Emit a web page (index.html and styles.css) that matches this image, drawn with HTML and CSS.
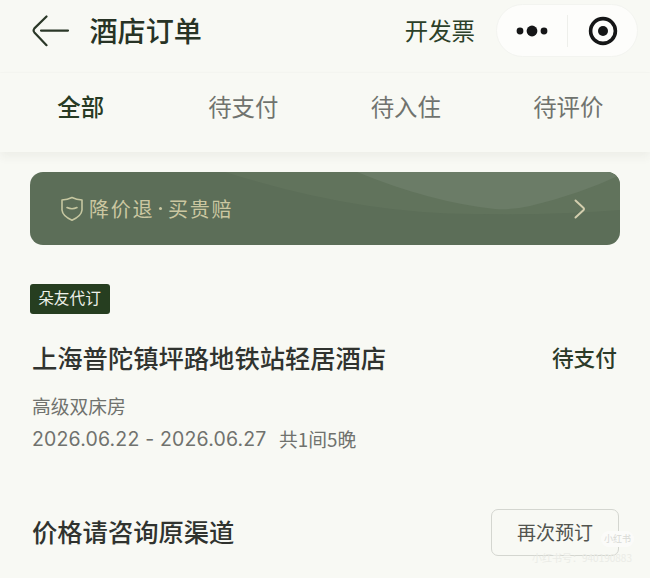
FILE: index.html
```html
<!DOCTYPE html>
<html lang="zh-CN">
<head>
<meta charset="utf-8">
<title>酒店订单</title>
<link rel="stylesheet" href="styles.css">
</head>
<body>
<header class="navbar">
  <svg class="back" width="38" height="32" viewBox="0 0 38 32"><path d="M14.500 1.500 2.400 13.400Q.8 15.500 2.400 17.400L14.500 30.200M9 15.600H36"/></svg>
  <h1 class="title">酒店订单</h1>
  <span class="invoice">开发票</span>
  <div class="capsule">
    <svg width="32" height="14" viewBox="0 0 32 14"><circle cx="4" cy="7" r="3.4"/><circle cx="16" cy="7" r="5.4"/><circle cx="28" cy="7" r="3.4"/></svg>
    <i class="divider"></i>
    <svg width="30" height="30" viewBox="0 0 30 30"><circle class="ring" cx="15" cy="15" r="12.4"/><circle cx="15" cy="15" r="5"/></svg>
  </div>
</header>
<nav class="tabs">
  <span class="tab active">全部</span>
  <span class="tab">待支付</span>
  <span class="tab">待入住</span>
  <span class="tab">待评价</span>
</nav>
<main class="content">
  <section class="banner">
    <svg class="waves" width="590" height="73" viewBox="0 0 590 73"><path class="wave" d="M195 0Q330 43 450 42Q530 43 590 38V0Z"/><path class="wave light" d="M327 0Q400 30 465 37Q483 38 500 34Q550 22 590 3V0Z"/></svg>
    <svg class="shield" width="24" height="26" viewBox="0 0 24 26"><path d="M12 1.500Q16.500 3.600 22 4V14Q21.500 20 12 24.200Q2.500 20 2 14V4Q7.500 3.600 12 1.500ZM7 11.500Q12 14 17 11.500"/></svg>
    <span class="promise"><span>降价退</span><i class="dot"></i><span>买贵赔</span></span>
    <svg class="chevron" width="12" height="20" viewBox="0 0 12 20"><path d="M1.500 1.500 9.600 9Q10.500 10 9.600 11L1.500 18.500"/></svg>
  </section>
  <article class="order">
    <span class="badge">朵友代订</span>
    <div class="row heading"><h2 class="hotel">上海普陀镇坪路地铁站轻居酒店</h2><span class="status">待支付</span></div>
    <p class="room">高级双床房</p>
    <p class="dates"><span class="range">2026.06.22 - 2026.06.27</span><span>共1间5晚</span></p>
    <div class="row footer">
      <strong class="price">价格请咨询原渠道</strong>
      <div class="rebook">再次预订<span class="mark">小红书</span><span class="mark-id">小红书号：940190883</span></div>
    </div>
  </article>
</main>
</body>
</html>
```
FILE: styles.css
```css
* { box-sizing: border-box; margin: 0; padding: 0; }
body {
  width: 650px; height: 578px; overflow: hidden;
  background: #f8f9f4; color: #30332f;
  font-family: "Noto Sans CJK SC", sans-serif;
}
svg { display: block; flex: none; fill: none; stroke-linecap: round; stroke-linejoin: round; }
.navbar { display: flex; align-items: center; height: 73px; padding: 0 12px 11px 32px; border-bottom: 1px solid #f5f6f1; }
.back { stroke: #2b3828; stroke-width: 2.2; }
.title { margin-left: 19.500px; padding-bottom: 1px; font-size: 28.100px; font-weight: 500; line-height: 40px; color: #283325; }
.invoice { margin-left: auto; padding-bottom: 1px; font-size: 23.400px; line-height: 34px; color: #2c4028; }
.capsule {
  display: flex; align-items: center; width: 142px; height: 53px; margin-left: 21px; padding: 0 18px 0 19px;
  border: 1px solid #f3f4f0; border-radius: 27px; background: #fdfdfb;
}
.capsule svg { fill: #151617; }
.capsule .ring { fill: none; stroke: #151617; stroke-width: 3.600px; }
.divider { width: 1px; height: 32px; margin: 0 20px 0 19px; background: #eeefeb; }
.tabs { display: flex; height: 79px; padding-top: 16px; box-shadow: 0 5px 9px rgba(60, 65, 50, .06); }
.tab { width: 162.500px; padding-right: 1px; text-align: center; font-size: 23.400px; line-height: 34px; color: #70736e; }
.active { font-weight: 500; color: #283b24; }
.content { padding: 20px 30px 0; }
.banner { position: relative; display: flex; align-items: center; height: 73px; padding: 0 34px 0 30px; border-radius: 13px; overflow: hidden; background: #5c6e58; }
.waves { position: absolute; inset: 0; }
.wave { fill: #61735c; }
.light { fill: #6b7c67; }
.shield { position: relative; stroke: #c6c7a0; stroke-width: 1.600px; }
.promise { position: relative; display: flex; align-items: center; margin-left: 5px; font-size: 20px; letter-spacing: 1.700px; line-height: 30px; color: #cbc7a1; }
.dot { width: 3px; height: 3px; margin: 0 6px 0 5px; border-radius: 50%; background: #cbc7a1; }
.chevron { position: relative; margin-left: auto; stroke: #d3ceae; stroke-width: 2; }
.order { padding-top: 39px; }
.badge { display: block; width: 80px; height: 30px; padding-right: 1px; border-radius: 3px; background: #263e20; color: #eef1ea; text-align: center; font-size: 15.700px; line-height: 28px; }
.row { display: flex; align-items: center; justify-content: space-between; padding-left: 2px; }
.heading { height: 40px; margin-top: 23px; padding-right: 3px; }
.hotel, .price { font-size: 25.300px; font-weight: 500; line-height: 40px; }
.status { padding-bottom: 2px; font-size: 21.700px; font-weight: 500; color: #2c3b29; }
.room { margin: 14px 0 0 2px; font-size: 18.800px; line-height: 30px; color: #70726e; }
.dates { display: flex; margin: 3px 0 0 2px; font-size: 18.800px; line-height: 30px; color: #70726e; }
.range { width: 247px; font-family: Inter, sans-serif; font-size: 19.500px; letter-spacing: .170px; white-space: nowrap; }
.footer { height: 47px; margin-top: 55px; padding-right: 1px; }
.price { padding-bottom: 4px; }
.rebook { position: relative; width: 128px; height: 47px; border: 1px solid #d4d6d0; border-radius: 7px; text-align: center; font-size: 19px; line-height: 44px; color: #52544f; }
.mark, .mark-id { position: absolute; white-space: nowrap; }
.mark { top: 21px; left: 109px; width: 33px; height: 16px; border-radius: 8px; background: #fbfbf9; font-size: 9px; line-height: 15px; color: #d8d9d5; }
.mark-id { top: 41px; left: 40px; font-size: 10px; line-height: 14px; color: #ebece7; }
```
